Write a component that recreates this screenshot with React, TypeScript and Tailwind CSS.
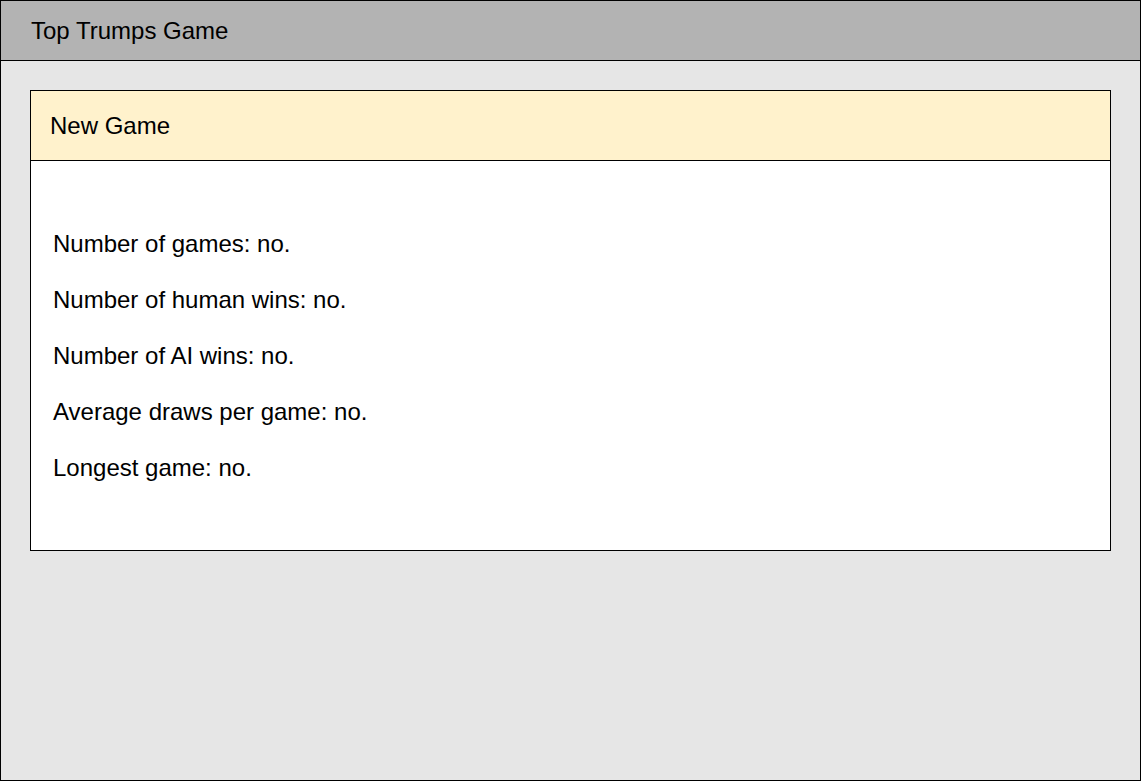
const stats = [
  'Number of games: no.',
  'Number of human wins: no.',
  'Number of AI wins: no.',
  'Average draws per game: no.',
  'Longest game: no.',
]

export default function App() {
  return (
    <div className="w-[1141px] h-[781px] border border-black bg-[#e6e6e6] flex flex-col font-['Liberation_Sans',Arial,sans-serif] text-[24px] text-black">
      <div className="h-[60px] shrink-0 bg-[#b3b3b3] border-b border-black flex items-center pl-[30px]">
        Top Trumps Game
      </div>
      <div className="p-[29px]">
        <div className="border border-black bg-white">
          <div className="h-[70px] bg-[#fff2cc] border-b border-black flex items-center pl-[19px]">
            New Game
          </div>
          <div className="h-[389px] pt-[55px] pl-[22px] flex flex-col">
            {stats.map((s) => (
              <div key={s} className="h-[56px] leading-[56px]">
                {s}
              </div>
            ))}
          </div>
        </div>
      </div>
    </div>
  )
}
